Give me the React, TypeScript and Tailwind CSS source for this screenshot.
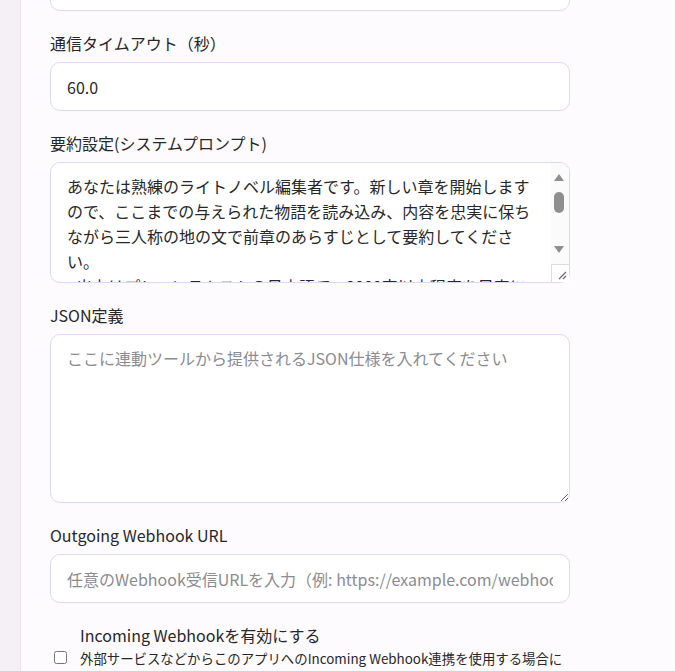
import React from "react";

const font = { fontFamily: '"Noto Sans CJK JP", "Noto Sans", sans-serif' };

const prompt =
  "あなたは熟練のライトノベル編集者です。新しい章を開始しますので、ここまでの与えられた物語を読み込み、内容を忠実に保ちながら三人称の地の文で前章のあらすじとして要約してください。\n- 出力はプレーンテキストの日本語で、2000字以内程度を目安にしてください。\n- 登場人物の名前や固有名詞は原文のまま使用してください。\n- 会話文は含めず、出来事の流れが分かるようにまとめてください。";

function Label({ children }: { children: React.ReactNode }) {
  return <label className="block text-[16px] leading-6 text-[#27272a] mb-[7px]">{children}</label>;
}

function Arrow({ down }: { down?: boolean }) {
  return (
    <svg width="10" height="7" viewBox="0 0 10 7" className="mx-auto block">
      <path d={down ? "M0 0 H10 L5 7 Z" : "M0 7 H10 L5 0 Z"} fill="#8f8f8f" />
    </svg>
  );
}

function FakeScrollbar() {
  return (
    <div className="pointer-events-none absolute right-px top-px bottom-px flex w-[18px] flex-col rounded-tr-[9px] bg-[#fbfbfb]">
      <div className="h-[22px] pt-[11px] pr-[2px]">
        <Arrow />
      </div>
      <div className="pt-[7px] pr-[2px]">
        <div className="mx-auto h-[21px] w-[10px] rounded-full bg-[#8f8f8f]" />
      </div>
      <div className="flex-1" />
      <div className="h-[18px] pr-[2px]">
        <Arrow down />
      </div>
      <div className="relative h-[18px] border-t border-l border-[#dcdcdc] bg-white">
        <svg width="9" height="9" viewBox="0 0 9 9" className="absolute right-[2px] bottom-[2px]">
          <path d="M8 1 L1 8 M8 5 L5 8" stroke="#6b6b6b" strokeWidth="1.2" />
        </svg>
      </div>
    </div>
  );
}

export default function App() {
  return (
    <div className="flex min-h-[671px] w-full bg-[#fdfbfd] overflow-hidden" style={font}>
      <aside className="w-[21px] shrink-0 bg-[#f5f0f5] border-r border-[#ebe5eb]" />
      <main className="w-[520px] ml-[29px] flex flex-col gap-5">
        <input
          className="-mt-[38px] h-[49px] w-full rounded-[10px] border border-[#ddd8f7] bg-white px-4 text-[16px] text-[#27272a] outline-none"
          defaultValue=""
        />

        <div>
          <Label>通信タイムアウト（秒）</Label>
          <input
            className="h-[49px] w-full rounded-[10px] border border-[#ddd8f7] bg-white px-4 text-[16px] text-[#27272a] outline-none"
            defaultValue="60.0"
          />
        </div>

        <div>
          <Label>要約設定(システムプロンプト)</Label>
          <div className="relative">
            <textarea
              className="block h-[121px] w-full resize-none overflow-hidden rounded-[10px] border border-[#ddd8f7] bg-white pl-4 pr-[32px] pt-[11px] text-[16px] leading-[25px] text-[#27272a] outline-none"
              defaultValue={prompt}
            />
            <FakeScrollbar />
          </div>
        </div>

        <div>
          <Label>JSON定義</Label>
          <textarea
            className="block h-[169px] w-full rounded-[10px] border border-[#ddd8f7] bg-white px-4 pt-[11px] text-[16px] leading-[25px] text-[#27272a] outline-none placeholder:text-[#8b8b93]"
            placeholder="ここに連動ツールから提供されるJSON仕様を入れてください"
          />
        </div>

        <div>
          <Label>Outgoing Webhook URL</Label>
          <input
            className="h-[49px] w-full rounded-[10px] border border-[#ddd8f7] bg-white px-4 text-[16px] text-[#27272a] outline-none placeholder:text-[#8b8b93]"
            placeholder="任意のWebhook受信URLを入力（例: https://example.com/webhook）"
          />
        </div>

        <div>
          <div className="pl-[30px] text-[16px] leading-6 text-[#27272a]">Incoming Webhookを有効にする</div>
          <div className="flex items-start gap-[13px] pl-[4px]">
            <input type="checkbox" className="mt-[4px] h-[13px] w-[13px] shrink-0" />
            <div className="text-[13.4px] leading-[22px] text-[#27272a]">
              外部サービスなどからこのアプリへのIncoming Webhook連携を使用する場合にチェックしてください。
            </div>
          </div>
        </div>
      </main>
    </div>
  );
}
